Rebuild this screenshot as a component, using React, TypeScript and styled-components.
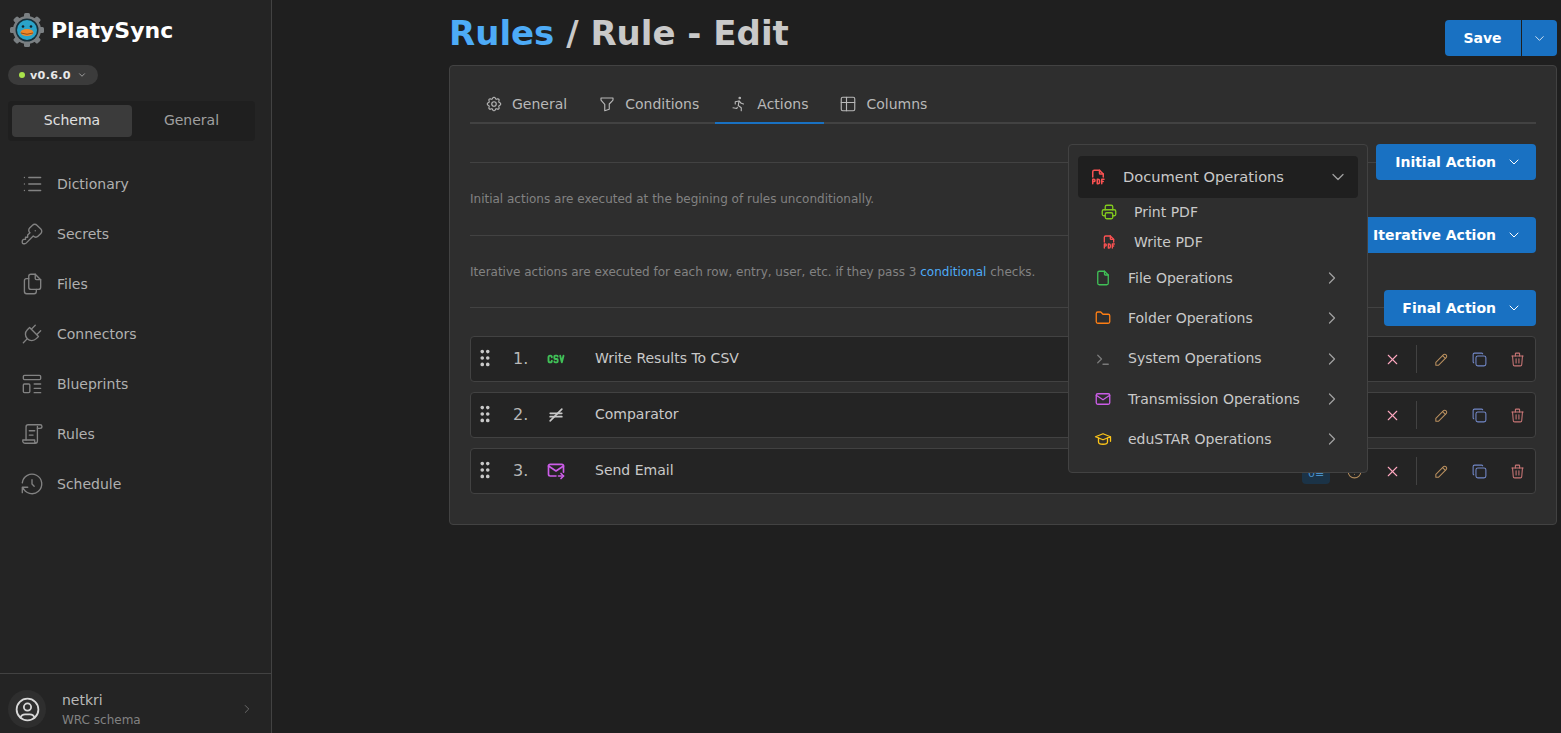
import React from 'react';
import styled, { createGlobalStyle } from 'styled-components';
import {
  TbList,
  TbKey,
  TbFiles,
  TbPlug,
  TbTemplate,
  TbHistory,
  TbSettings,
  TbFilter,
  TbRun,
  TbTable,
  TbChevronDown,
  TbChevronRight,
  TbUserCircle,
  TbGripVertical,
  TbCsv,
  TbEqualNot,
  TbMailForward,
  TbX,
  TbPencil,
  TbCopy,
  TbTrash,
  TbFileTypePdf,
  TbPrinter,
  TbFile,
  TbFolder,
  TbTerminal,
  TbMail,
  TbSchool,
  TbAlertCircle,
} from 'react-icons/tb';

const GlobalStyle = createGlobalStyle`
  html, body {
    margin: 0;
    height: 100%;
    background: #1f1f1f;
    overflow: hidden;
  }
  body, button {
    font-family: 'DejaVu Sans', sans-serif;
  }
  #root {
    height: 100%;
  }
`;

const Shell = styled.div`
  display: flex;
  height: 733px;
  color: #c9c9c9;
`;

const Sidebar = styled.aside`
  width: 271px;
  flex: none;
  display: flex;
  flex-direction: column;
  background: #242424;
  border-right: 1px solid #424242;
`;

const Brand = styled.div`
  display: flex;
  align-items: center;
  gap: 6px;
  padding: 10px 0 2px 9px;
  height: 40px;
  font-size: 22px;
  font-weight: 700;
  color: #fff;
`;

const VersionPill = styled.div`
  display: flex;
  align-items: center;
  align-self: flex-start;
  gap: 5px;
  height: 20px;
  margin: 13px 0 0 8px;
  padding: 0 11px;
  border-radius: 10px;
  background: #3b3b3b;
  font-size: 11.2px;
  font-weight: 700;
  color: #e8e8e8;
  letter-spacing: 0.3px;

  svg {
    margin-left: 1px;
  }
`;

const Dot = styled.span`
  width: 6px;
  height: 6px;
  border-radius: 50%;
  background: #a9e34b;
`;

const Segments = styled.div`
  display: flex;
  margin: 16px 16px 0 8px;
  padding: 4px;
  height: 32px;
  border-radius: 4px;
  background: #1f1f1f;
`;

const Segment = styled.div<{ $active?: boolean }>`
  width: ${({ $active }) => ($active ? '120px' : '119px')};
  display: flex;
  align-items: center;
  justify-content: center;
  padding-bottom: 3px;
  box-sizing: border-box;
  border-radius: 4px;
  font-size: 14px;
  background: ${({ $active }) => ($active ? '#3b3b3b' : 'transparent')};
  color: ${({ $active }) => ($active ? '#e0e0e0' : '#a0a0a0')};
`;

const Nav = styled.nav`
  display: flex;
  flex-direction: column;
  margin-top: 18px;
`;

const NavItem = styled.div`
  display: flex;
  align-items: center;
  gap: 12px;
  height: 50px;
  padding-left: 19px;
  font-size: 14px;
  color: #b0b0b0;

  svg {
    width: 26px;
    height: 26px;
    stroke-width: 1.25;
    color: #828282;
  }
`;

const UserFooter = styled.div`
  display: flex;
  align-items: center;
  box-sizing: border-box;
  height: 60px;
  margin-top: auto;
  padding: 16px 17px 5px 8px;
  border-top: 1px solid #424242;
`;

const Avatar = styled.div`
  display: flex;
  align-items: center;
  justify-content: center;
  width: 38px;
  height: 38px;
  flex: none;
  border-radius: 50%;
  background: #2e2e2e;
  color: #d8d8d8;
`;

const UserText = styled.div`
  flex: 1;
  margin-left: 16px;
`;

const UserName = styled.div`
  font-size: 14px;
  line-height: 20px;
  color: #b8b8b8;
`;

const UserSchema = styled.div`
  padding-top: 1px;
  font-size: 12px;
  line-height: 18px;
  color: #828282;
`;

const Main = styled.main`
  flex: 1;
  min-width: 0;
  padding: 0 4px 0 177px;
`;

const TitleBar = styled.header`
  display: flex;
  justify-content: space-between;
  height: 65px;
`;

const Title = styled.h1`
  margin: 13px 0 0;
  font-size: 34px;
  line-height: 40px;
  font-weight: 700;
  color: #c9c9c9;
`;

const TitleLink = styled.span`
  color: #4dabf7;
`;

const SaveGroup = styled.div`
  display: flex;
  height: 36px;
  margin-top: 20px;
  gap: 1px;
`;

const BlueButton = styled.button`
  display: flex;
  align-items: center;
  justify-content: center;
  border: 0;
  padding: 0;
  background: #1971c2;
  color: #fff;
  font-size: 14px;
  font-weight: 700;
`;

const SaveButton = styled(BlueButton)`
  width: 76px;
  padding-right: 1px;
  border-radius: 4px 0 0 4px;
`;

const SaveCaret = styled(BlueButton)`
  width: 35px;
  border-radius: 0 4px 4px 0;
`;

const Panel = styled.section`
  position: relative;
  height: 418px;
  padding: 20px;
  border: 1px solid #424242;
  border-radius: 4px;
  background: #2e2e2e;
`;

const TabList = styled.div`
  display: flex;
  height: 36px;
  border-bottom: 2px solid #424242;
`;

const Tab = styled.div<{ $active?: boolean }>`
  display: flex;
  align-items: center;
  gap: 9px;
  height: 36px;
  padding: 0 16px 0 15px;
  font-size: 14px;
  color: #b8b8b8;
  border-bottom: 2px solid ${({ $active }) => ($active ? '#1971c2' : 'transparent')};
`;

const Section = styled.div`
  height: 73px;

  &:nth-child(2) {
    height: 72.5px;
  }
`;

const SectionHead = styled.div`
  display: flex;
  align-items: center;
  height: 36px;
`;

const Rule = styled.div`
  flex: 1;
  border-top: 1px solid #424242;
`;

const ActionButton = styled(BlueButton)<{ $width: number }>`
  justify-content: flex-end;
  width: ${({ $width }) => $width}px;
  height: 36px;
  gap: 10px;
  padding-right: 14px;
  border-radius: 4px;
`;

const Hint = styled.p`
  margin: 10px 0 0;
  font-size: 12px;
  line-height: 18px;
  color: #828282;
`;

const HintLink = styled.span`
  color: #4dabf7;
`;

const Sections = styled.div`
  margin-top: 20px;
`;

const Rows = styled.div`
  display: flex;
  flex-direction: column;
  gap: 10px;
  margin-top: -26.5px;
`;

const Row = styled.div`
  display: flex;
  align-items: center;
  height: 44px;
  border: 1px solid #424242;
  border-radius: 4px;
  background: #242424;
  font-size: 14px;
  color: #c9c9c9;
`;

const Grip = styled.span`
  display: flex;
  width: 28px;
  justify-content: center;
  padding-bottom: 2px;
  color: #c9c9c9;
`;

const RowNumber = styled.span`
  width: 33px;
  margin-left: 14px;
  padding-bottom: 2px;
  font-size: 16px;
  color: #b8b8b8;
`;

const RowIcon = styled.span<{ $color: string }>`
  display: flex;
  justify-content: center;
  width: 20px;
  margin-right: 29px;
  padding-bottom: 1px;
  color: ${({ $color }) => $color};
`;

const RowLabel = styled.span`
  flex: 1;
  padding-bottom: 2px;
`;

const Badge = styled.span`
  width: 28px;
  height: 22px;
  margin: 3px 5px 0 0;
  border-radius: 4px;
  background: #1b3347;
  color: #4a90c8;
  font-size: 11px;
  line-height: 24px;
  text-align: center;
`;

const RowAction = styled.span<{ $color: string }>`
  display: flex;
  justify-content: center;
  width: 38px;
  color: ${({ $color }) => $color};

  &:last-child {
    margin-right: -1px;
  }
`;

const RowDivider = styled.span`
  height: 28px;
  margin: 0 5px;
  border-left: 1px solid #424242;
`;

const MenuPopup = styled.div`
  position: absolute;
  top: 78px;
  left: 618px;
  width: 280px;
  height: 305px;
  padding: 11px 9px;
  border: 1px solid #424242;
  border-radius: 4px;
  background: #2e2e2e;
`;

const MenuGroupOpen = styled.div`
  display: flex;
  align-items: center;
  height: 42px;
  padding: 0 10px 0 11px;
  border-radius: 4px;
  background: #1f1f1f;
  font-size: 14.65px;
  color: #c9c9c9;
`;

const MenuIcon = styled.span<{ $color: string }>`
  display: flex;
  width: 34px;
  color: ${({ $color }) => $color};
`;

const MenuLabel = styled.span`
  flex: 1;
  padding-bottom: 1px;
`;

const SubList = styled.div`
  display: flex;
  flex-direction: column;
  margin: -1px 0 1px;
`;

const SubItem = styled.div`
  display: flex;
  align-items: center;
  height: 30px;
  padding-left: 22px;
  font-size: 14px;
  color: #c9c9c9;
`;

const SubIcon = styled.span<{ $color: string }>`
  display: flex;
  justify-content: center;
  width: 18px;
  margin-right: 16px;
  color: ${({ $color }) => $color};
`;

const MenuItem = styled.div`
  display: flex;
  align-items: center;
  height: 40.3px;
  padding: 0 16px 0 16px;
  font-size: 14px;
  color: #c9c9c9;
`;

const ItemIcon = styled.span<{ $color: string }>`
  display: flex;
  width: 34px;
  color: ${({ $color }) => $color};
`;

const LogoSvg = styled.svg`
  width: 36px;
  height: 36px;
  flex: none;
`;

const Logo = () => {
  const teeth = [0, 45, 90, 135, 180, 225, 270, 315];
  return (
    <LogoSvg viewBox='0 0 36 36'>
      {teeth.map((a) => (
        <rect key={a} x='15' y='1' width='6' height='7' rx='1.5' fill='#7a7f82' transform={`rotate(${a} 18 18)`} />
      ))}
      <circle cx='18' cy='18' r='14' fill='#7a7f82' />
      <circle cx='18' cy='18' r='11.5' fill='#16303a' />
      <circle cx='18' cy='18' r='10' fill='#2aa3c9' />
      <circle cx='14' cy='14.5' r='1.3' fill='#10222a' />
      <circle cx='22' cy='14.5' r='1.3' fill='#10222a' />
      <ellipse cx='18' cy='20.5' rx='6.5' ry='3.4' fill='#f0892b' />
      <path d='M12 21 Q18 23.5 24 21' stroke='#7a3d10' strokeWidth='0.8' fill='none' />
    </LogoSvg>
  );
};

// scroll with text lines, no matching icon in the package
const RulesIcon = () => (
  <svg viewBox='0 0 24 24' fill='none' stroke='currentColor' strokeLinecap='round' strokeLinejoin='round'>
    <path d='M6.5 17.5V5.5a2 2 0 0 1 2-2h11a1.7 1.7 0 0 1 1.7 1.6c0 .9-.7 1.7-1.7 1.7H17' />
    <path d='M17 5v13.5a2 2 0 0 1-2 2H5.5a2 2 0 0 1-2-1.5v-1.5h11v1.5a2 2 0 0 0 .5 1' />
    <path d='M9.5 9h5M9.5 13h3.5' />
  </svg>
);

const navItems = [
  { label: 'Dictionary', icon: <TbList /> },
  { label: 'Secrets', icon: <TbKey /> },
  { label: 'Files', icon: <TbFiles /> },
  { label: 'Connectors', icon: <TbPlug /> },
  { label: 'Blueprints', icon: <TbTemplate /> },
  { label: 'Rules', icon: <RulesIcon /> },
  { label: 'Schedule', icon: <TbHistory /> },
];

const tabs = [
  { label: 'General', icon: <TbSettings size={18} strokeWidth={1.5} /> },
  { label: 'Conditions', icon: <TbFilter size={18} strokeWidth={1.5} /> },
  { label: 'Actions', icon: <TbRun size={18} strokeWidth={1.5} />, active: true },
  { label: 'Columns', icon: <TbTable size={18} strokeWidth={1.5} /> },
];

const menuItems = [
  { label: 'File Operations', color: '#40c057', icon: <TbFile size={18} strokeWidth={1.75} /> },
  { label: 'Folder Operations', color: '#fd7e14', icon: <TbFolder size={18} strokeWidth={1.75} /> },
  { label: 'System Operations', color: '#7a7a7a', icon: <TbTerminal size={18} strokeWidth={1.75} /> },
  { label: 'Transmission Operations', color: '#cc5de8', icon: <TbMail size={18} strokeWidth={1.75} /> },
  { label: 'eduSTAR Operations', color: '#fcc419', icon: <TbSchool size={18} strokeWidth={1.75} /> },
];

const rows = [
  { label: 'Write Results To CSV', color: '#40c057', icon: <TbCsv size={22} strokeWidth={2.25} /> },
  { label: 'Comparator', color: '#c9c9c9', icon: <TbEqualNot size={20} /> },
  { label: 'Send Email', color: '#cc5de8', icon: <TbMailForward size={20} />, badge: true },
];

export default function App() {
  return (
    <>
      <GlobalStyle />
      <Shell>
        <Sidebar>
          <Brand>
            <Logo />
            PlatySync
          </Brand>
          <VersionPill>
            <Dot />
            v0.6.0
            <TbChevronDown size={10} color='#b0b0b0' />
          </VersionPill>
          <Segments>
            <Segment $active>Schema</Segment>
            <Segment>General</Segment>
          </Segments>
          <Nav>
            {navItems.map((item) => (
              <NavItem key={item.label}>
                {item.icon}
                {item.label}
              </NavItem>
            ))}
          </Nav>
          <UserFooter>
            <Avatar>
              <TbUserCircle size={29} strokeWidth={1.5} />
            </Avatar>
            <UserText>
              <UserName>netkri</UserName>
              <UserSchema>WRC schema</UserSchema>
            </UserText>
            <TbChevronRight size={14} color='#828282' strokeWidth={1.25} />
          </UserFooter>
        </Sidebar>
        <Main>
          <TitleBar>
            <Title>
              <TitleLink>Rules</TitleLink> / Rule - Edit
            </Title>
            <SaveGroup>
              <SaveButton>Save</SaveButton>
              <SaveCaret>
                <TbChevronDown size={15} strokeWidth={1.25} />
              </SaveCaret>
            </SaveGroup>
          </TitleBar>
          <Panel>
            <TabList>
              {tabs.map((tab) => (
                <Tab key={tab.label} $active={tab.active}>
                  {tab.icon}
                  {tab.label}
                </Tab>
              ))}
            </TabList>
            <Sections>
              <Section>
                <SectionHead>
                  <Rule />
                  <ActionButton $width={160}>
                    Initial Action
                    <TbChevronDown size={16} strokeWidth={1.5} />
                  </ActionButton>
                </SectionHead>
                <Hint>Initial actions are executed at the begining of rules unconditionally.</Hint>
              </Section>
              <Section>
                <SectionHead>
                  <Rule />
                  <ActionButton $width={182}>
                    Iterative Action
                    <TbChevronDown size={16} strokeWidth={1.5} />
                  </ActionButton>
                </SectionHead>
                <Hint>
                  Iterative actions are executed for each row, entry, user, etc. if they pass 3{' '}
                  <HintLink>conditional</HintLink> checks.
                </Hint>
              </Section>
              <Section>
                <SectionHead>
                  <Rule />
                  <ActionButton $width={152}>
                    Final Action
                    <TbChevronDown size={16} strokeWidth={1.5} />
                  </ActionButton>
                </SectionHead>
              </Section>
            </Sections>
            <Rows>
              {rows.map((row, i) => (
                <Row key={row.label}>
                  <Grip>
                    <TbGripVertical size={22} />
                  </Grip>
                  <RowNumber>{i + 1}.</RowNumber>
                  <RowIcon $color={row.color}>{row.icon}</RowIcon>
                  <RowLabel>{row.label}</RowLabel>
                  {row.badge && (
                    <>
                      <Badge>0≡</Badge>
                      <RowAction $color='#b08a5a'>
                        <TbAlertCircle size={17} strokeWidth={1.5} />
                      </RowAction>
                    </>
                  )}
                  <RowAction $color='#ffa8c0'>
                    <TbX size={17} strokeWidth={1.5} />
                  </RowAction>
                  <RowDivider />
                  <RowAction $color='#b98f5e'>
                    <TbPencil size={17} strokeWidth={1.5} />
                  </RowAction>
                  <RowAction $color='#7288c8'>
                    <TbCopy size={17} strokeWidth={1.5} />
                  </RowAction>
                  <RowAction $color='#c97676'>
                    <TbTrash size={17} strokeWidth={1.5} />
                  </RowAction>
                </Row>
              ))}
            </Rows>
            <MenuPopup>
              <MenuGroupOpen>
                <MenuIcon $color='#fa5252'>
                  <TbFileTypePdf size={18} />
                </MenuIcon>
                <MenuLabel>Document Operations</MenuLabel>
                <TbChevronDown size={20} color='#a0a0a0' strokeWidth={1.5} />
              </MenuGroupOpen>
              <SubList>
                <SubItem>
                  <SubIcon $color='#82c91e'>
                    <TbPrinter size={18} strokeWidth={1.75} />
                  </SubIcon>
                  Print PDF
                </SubItem>
                <SubItem>
                  <SubIcon $color='#fa5252'>
                    <TbFileTypePdf size={16} />
                  </SubIcon>
                  Write PDF
                </SubItem>
              </SubList>
              {menuItems.map((item) => (
                <MenuItem key={item.label}>
                  <ItemIcon $color={item.color}>{item.icon}</ItemIcon>
                  <MenuLabel>{item.label}</MenuLabel>
                  <TbChevronRight size={20} color='#a0a0a0' strokeWidth={1.5} />
                </MenuItem>
              ))}
            </MenuPopup>
          </Panel>
        </Main>
      </Shell>
    </>
  );
}
